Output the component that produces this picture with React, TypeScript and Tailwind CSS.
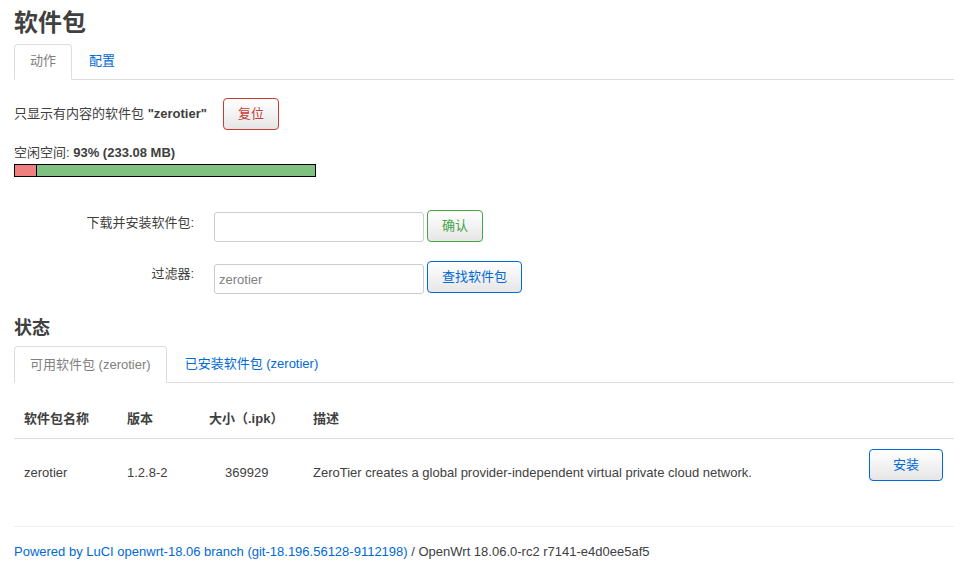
export default function App() {
  const font = { fontFamily: '"Liberation Sans", "Noto Sans CJK SC", sans-serif' };

  return (
    <div style={font} className="min-h-[569px] bg-white px-[14px] pr-[11px] text-[13px] leading-[18px] text-[#404040]">
      {/* Header */}
      <h2 className="pt-[6px] text-[24px] font-bold leading-[34px] text-[#404040]">软件包</h2>

      {/* Tabs */}
      <ul className="mt-[4px] flex h-[36px] border-b border-[#ddd]">
        <li className="-mb-px flex items-center rounded-t-[4px] border border-[#ddd] border-b-white bg-white px-[15px] pb-[2px] text-[#808080]">
          动作
        </li>
        <li className="flex items-center px-[17px] pb-[2px] text-[#0069d6]">配置</li>
      </ul>

      {/* Filter notice */}
      <div className="mt-[18px] flex items-center">
        <span>
          只显示有内容的软件包 <b>"zerotier"</b>
        </span>
        <button className="ml-[16px] h-[32px] w-[56px] rounded-[4px] border border-[#c43c35] bg-gradient-to-b from-white to-[#e6e6e6] text-[#c43c35]">
          复位
        </button>
      </div>

      {/* Free space */}
      <div className="mt-[14px]">
        空闲空间: <b>93% (233.08 MB)</b>
      </div>
      <div className="mt-[2px] flex h-[13px] w-[302px] border border-black">
        <div className="w-[21px] bg-[#f08080]"></div>
        <div className="flex-1 border-l border-black bg-[#80c080]"></div>
      </div>

      {/* Form */}
      <div className="mt-[33px] flex items-start">
        <label className="mt-[4px] w-[180px] text-right">下载并安装软件包:</label>
        <input className="ml-[20px] mt-[2px] h-[30px] w-[210px] rounded-[3px] border border-[#ccc] px-[4px] outline-none" />
        <button className="ml-[3px] h-[32px] w-[56px] rounded-[4px] border border-[#46a546] bg-gradient-to-b from-white to-[#e6e6e6] text-[#46a546]">
          确认
        </button>
      </div>
      <div className="mt-[19px] flex items-start">
        <label className="mt-[4px] w-[180px] text-right">过滤器:</label>
        <input
          defaultValue="zerotier"
          className="ml-[20px] mt-[3px] h-[30px] w-[210px] rounded-[3px] border border-[#ccc] px-[4px] text-[#808080] outline-none"
        />
        <button className="ml-[3px] h-[32px] w-[95px] rounded-[4px] border border-[#0069d6] bg-gradient-to-b from-white to-[#e6e6e6] text-[#0069d6]">
          查找软件包
        </button>
      </div>

      {/* Status */}
      <h3 className="mt-[22px] text-[18px] font-bold leading-[24px]">状态</h3>
      <ul className="mt-[6px] flex h-[37px] border-b border-[#ddd]">
        <li className="-mb-px flex items-center rounded-t-[4px] border border-[#ddd] border-b-white bg-white px-[15px] text-[#808080]">
          可用软件包 (zerotier)
        </li>
        <li className="flex items-center px-[18px] text-[#0069d6]">已安装软件包 (zerotier)</li>
      </ul>

      <table className="mt-[18px] w-full table-fixed border-collapse">
        <colgroup>
          <col className="w-[103px]" />
          <col className="w-[82px]" />
          <col className="w-[104px]" />
          <col />
          <col className="w-[100px]" />
        </colgroup>
        <thead>
          <tr className="border-b border-[#ddd]">
            <th className="h-[37px] pl-[10px] text-left font-bold">软件包名称</th>
            <th className="pl-[10px] text-left font-bold">版本</th>
            <th className="pl-[10px] text-left font-bold">大小（.ipk）</th>
            <th className="pl-[10px] text-left font-bold">描述</th>
            <th></th>
          </tr>
        </thead>
        <tbody>
          <tr className="h-[66px] align-top">
            <td className="pl-[10px] pt-[25px]">zerotier</td>
            <td className="pl-[10px] pt-[25px]">1.2.8-2</td>
            <td className="pl-[26px] pt-[25px]">369929</td>
            <td className="pl-[10px] pt-[25px] whitespace-nowrap">ZeroTier creates a global provider-independent virtual private cloud network.</td>
            <td className="pr-[11px] pt-[10px] text-right">
              <button className="h-[32px] w-[74px] rounded-[4px] border border-[#0069d6] bg-gradient-to-b from-white to-[#e6e6e6] text-[#0069d6]">
                安装
              </button>
            </td>
          </tr>
        </tbody>
      </table>

      {/* Footer */}
      <footer className="mt-[22px] border-t border-[#eee] pt-[16px]">
        <a className="text-[#0069d6]">Powered by LuCI openwrt-18.06 branch (git-18.196.56128-9112198)</a>
        <span> / OpenWrt 18.06.0-rc2 r7141-e4d0ee5af5</span>
      </footer>
    </div>
  );
}
